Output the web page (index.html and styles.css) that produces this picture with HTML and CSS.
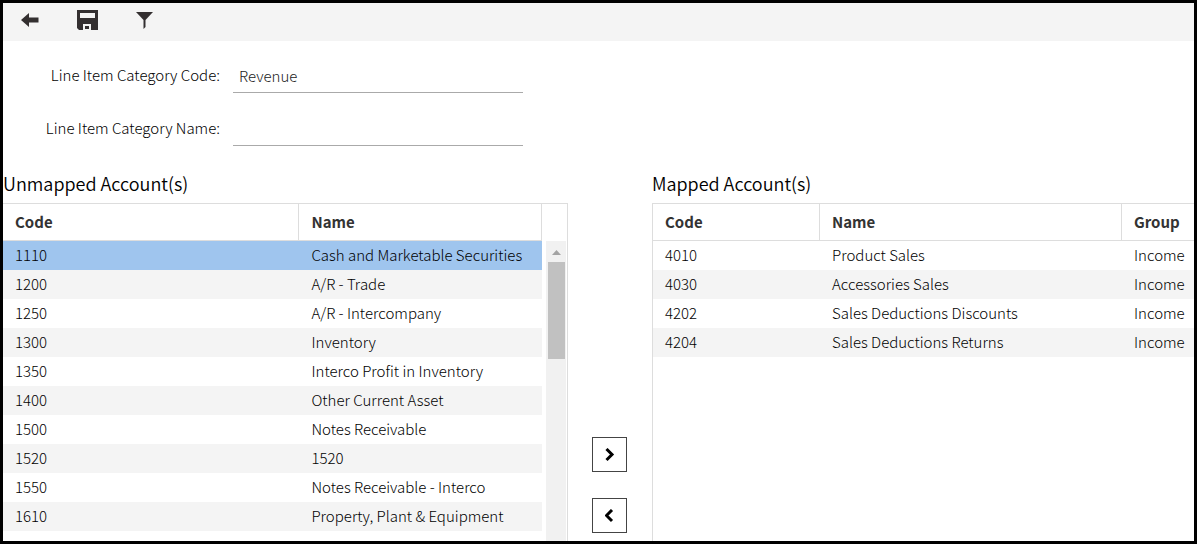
FILE: index.html
```html
<!DOCTYPE html>
<html lang="en">
<head>
<meta charset="utf-8">
<title>Account Mapping</title>
<link rel="stylesheet" href="styles.css">
</head>
<body class="page">
<header class="toolbar">
  <button class="tool" type="button" aria-label="Back"><svg width="18" height="14" viewBox="0 0 18 14"><path d="M0 7 8 0V4.500H17.500V9.500H8V14Z"/></svg></button>
  <button class="tool" type="button" aria-label="Save"><svg width="21" height="20" viewBox="0 0 21 20"><path fill-rule="evenodd" d="M0 0H21V20H2L0 18ZM3 3V8H18V3ZM6 14V20H14V14ZM8 16H12V19H8Z"/></svg></button>
  <button class="tool" type="button" aria-label="Filter"><svg width="17" height="17" viewBox="0 0 17 17"><path d="M0 0H17L9.500 8V15L7.500 17V8Z"/></svg></button>
</header>
<form class="form">
  <label class="label" for="code">Line Item Category Code:</label>
  <input class="field" id="code" type="text" value="Revenue">
  <label class="label" for="name">Line Item Category Name:</label>
  <input class="field" id="name" type="text">
</form>
<main class="mapping">
  <section class="panel">
    <h2 class="title">Unmapped Account(s)</h2>
    <div class="box box-left">
      <table class="grid">
        <colgroup><col class="col-code"><col></colgroup>
        <thead><tr><th>Code</th><th>Name</th></tr></thead>
        <tbody>
          <tr class="selected"><td>1110</td><td>Cash and Marketable Securities</td></tr>
          <tr><td>1200</td><td>A/R - Trade</td></tr>
          <tr><td>1250</td><td>A/R - Intercompany</td></tr>
          <tr><td>1300</td><td>Inventory</td></tr>
          <tr><td>1350</td><td>Interco Profit in Inventory</td></tr>
          <tr><td>1400</td><td>Other Current Asset</td></tr>
          <tr><td>1500</td><td>Notes Receivable</td></tr>
          <tr><td>1520</td><td>1520</td></tr>
          <tr><td>1550</td><td>Notes Receivable - Interco</td></tr>
          <tr><td>1610</td><td>Property, Plant &amp; Equipment</td></tr>
        </tbody>
      </table>
      <div class="scrollbar"><span class="scroll-up"></span><span class="thumb"></span></div>
    </div>
  </section>
  <div class="movers">
    <button class="move" type="button" aria-label="Map account"><svg width="10" height="14" viewBox="0 0 10 14"><path d="M1.500 1 7 6.500 1.500 12"/></svg></button>
    <button class="move" type="button" aria-label="Unmap account"><svg width="10" height="14" viewBox="0 0 10 14"><path d="M7 1 1.500 6.500 7 12"/></svg></button>
  </div>
  <section class="panel">
    <h2 class="title">Mapped Account(s)</h2>
    <div class="box box-right">
      <table class="grid">
        <colgroup><col class="col-mapped-code"><col><col class="col-group"></colgroup>
        <thead><tr><th>Code</th><th>Name</th><th>Group</th></tr></thead>
        <tbody>
          <tr><td>4010</td><td>Product Sales</td><td>Income</td></tr>
          <tr><td>4030</td><td>Accessories Sales</td><td>Income</td></tr>
          <tr><td>4202</td><td>Sales Deductions Discounts</td><td>Income</td></tr>
          <tr><td>4204</td><td>Sales Deductions Returns</td><td>Income</td></tr>
        </tbody>
      </table>
    </div>
  </section>
</main>
</body>
</html>
```
FILE: styles.css
```css
* { box-sizing: border-box; }

.page {
  margin: 0;
  min-height: 100vh;
  display: flex;
  flex-direction: column;
  border: 3px solid #000;
  background: #fff;
  color: #000;
  font: 300 15px/20px "Noto Sans CJK SC", "Open Sans", sans-serif;
}

.toolbar {
  display: flex;
  align-items: center;
  gap: 35px;
  height: 38px;
  padding: 0 0 4px 16px;
  background: #f4f4f4;
}

.tool {
  display: flex;
  align-items: center;
  justify-content: center;
  width: 22px;
  height: 24px;
  padding: 0;
  border: 0;
  background: none;
  fill: #332f30;
}

.tool svg { flex: none; }

.form {
  display: grid;
  grid-template-columns: 217px 290px;
  column-gap: 13px;
  row-gap: 20px;
  padding-top: 19px;
}

.label {
  padding-top: 5px;
  text-align: right;
}

.field {
  width: 100%;
  height: 33px;
  padding: 0 6px 2px;
  border: 0;
  border-bottom: 1px solid #aaa;
  background: none;
  color: #222;
  font: inherit;
  outline: 0;
}

.mapping {
  flex: 1;
  display: grid;
  grid-template-columns: 565fr 84px 542fr;
  padding-top: 25px;
}

.panel {
  display: flex;
  flex-direction: column;
  min-width: 0;
}

.title {
  margin: 0;
  height: 32px;
  font-size: 18px;
  font-weight: 350;
  line-height: 24px;
}

.box {
  flex: 1;
  display: flex;
  align-items: flex-start;
  border-top: 1px solid #ddd;
}

.box-left { border-right: 1px solid #ddd; }
.box-right { border-left: 1px solid #ddd; }

.grid {
  flex: 1;
  min-width: 0;
  table-layout: fixed;
  border-spacing: 0;
}

.col-code { width: 55%; }
.col-mapped-code { width: 167px; }
.col-group { width: 72px; }

.grid th,
.grid td {
  padding: 0 0 0 12px;
  text-align: left;
  white-space: nowrap;
}

.grid th {
  height: 37px;
  border-right: 1px solid #ddd;
  border-bottom: 1px solid #ddd;
  color: #333;
  font-weight: 700;
}

.box-right th:last-child { border-right: 0; }

.grid td {
  height: 29px;
  padding-bottom: 1px;
}

.grid tbody tr:nth-child(even) { background: #f4f4f4; }
.grid .selected { background: #9fc5ee; }

.scrollbar {
  align-self: stretch;
  width: 20px;
  margin: 37px 1px 0 4px;
  padding: 9px 1px 0 2px;
  background: #f1f1f1;
}

.scroll-up,
.thumb { display: block; }

.scroll-up {
  width: 9px;
  height: 5px;
  margin: 0 auto 7px;
  background: #a3a3a3;
  clip-path: polygon(50% 0, 100% 100%, 0 100%);
}

.thumb {
  height: 97px;
  background: #c1c1c1;
}

.movers {
  display: flex;
  flex-direction: column;
  align-items: center;
  justify-content: flex-end;
  gap: 26px;
  padding: 0 1px 8px 0;
}

.move {
  display: flex;
  align-items: center;
  justify-content: center;
  width: 35px;
  height: 35px;
  padding: 0;
  border: 1px solid #444;
  background: #fff;
}

.move svg {
  fill: none;
  stroke: #000;
  stroke-width: 3;
}
```
